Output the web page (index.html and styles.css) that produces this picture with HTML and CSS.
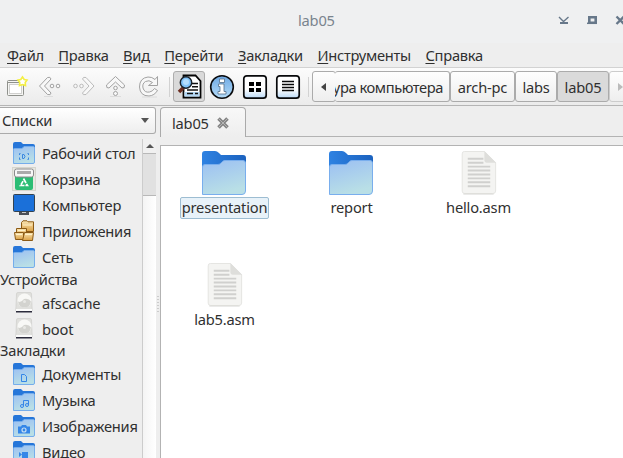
FILE: index.html
```html
<!DOCTYPE html>
<html lang="ru">
<head>
<meta charset="utf-8">
<title>lab05</title>
<link rel="stylesheet" href="styles.css">
</head>
<body>
<svg class="defs" width="0" height="0">
  <defs>
    <linearGradient id="front" x1="0" y1="0" x2=".35" y2="1"><stop offset="0" stop-color="#9bbff3"/><stop offset="1" stop-color="#b9dfe6"/></linearGradient>
    <linearGradient id="back" x1="0" y1="0" x2="1" y2="0"><stop offset="0" stop-color="#2f82e2"/><stop offset="1" stop-color="#1b62bf"/></linearGradient>
    <linearGradient id="gloss" x1="0" y1="0" x2="0" y2="1"><stop offset="0" stop-color="#6da8e3"/><stop offset="1" stop-color="#b5dcf8"/></linearGradient>
    <linearGradient id="tile" x1="0" y1="0" x2="0" y2="1"><stop offset="0" stop-color="#fff"/><stop offset=".6" stop-color="#fff"/><stop offset="1" stop-color="#b9d9f7"/></linearGradient>
    <linearGradient id="gold" x1="0" y1="0" x2="0" y2="1"><stop offset="0" stop-color="#fae6b4"/><stop offset="1" stop-color="#daa044"/></linearGradient>
    <symbol id="folder" viewBox="0 0 44 44">
      <path fill="url(#back)" d="M0 3Q0 0 3 0H13Q15 0 17 2L19 4H41Q44 4 44 7V20H0z"/>
      <path fill="url(#front)" stroke="#79aeed" d="M.5 16Q.5 13.500 3 13.500H16Q18 13.500 19.500 11.500L20.500 10.500Q21.500 9.500 23 9.500H41Q43.500 9.500 43.500 12V40Q43.500 43.500 40 43.500H.5z"/>
    </symbol>
    <symbol id="folder-small" viewBox="0 0 22 22">
      <path fill="#2676d9" d="M0 2Q0 0 2 0H8L10 2H20Q22 2 22 4V10H0z"/>
      <path fill="url(#front)" stroke="#75adeb" d="M.5 7Q.5 6.500 1.500 6.500H9L11 4.500H20.500Q21.500 4.500 21.500 6V20Q21.500 21.500 20 21.500H.5z"/>
    </symbol>
    <symbol id="file" viewBox="0 0 36 45">
      <path fill="#f4f4f2" stroke="#e4e4e1" d="M3 .5H23.500L35 12V41Q35 43.500 32 43.500H3.500Q.8 43.500.8 41V3Q.8.5 3 .5z"/>
      <path stroke="#d6d6d3" d="M2 44H33"/>
      <path fill="#dededb" d="M23.500 0L35.500 12H26Q23.500 12 23.500 9z"/>
      <path stroke="#d0d0ce" stroke-width="2" d="M6.500 8H22.500M6.500 12H22.500M6.500 16H29.500M6.500 20H29.500M6.500 24H29.500M6.500 28H29.500M6.500 32H29.500M6.500 36H29.500"/>
    </symbol>
    <symbol id="drive" viewBox="0 0 22 22">
      <path fill="#e0e0dd" stroke="#cfcfcb" stroke-width=".7" d="M5 .5H17Q18.500.5 18.500 2L19.200 19H2.800L3.500 2Q3.500.5 5 .5z"/>
      <circle cx="11.500" cy="8.500" r="7" fill="#f8f8f6"/>
      <path fill="#d3d3cf" d="M5 9.500Q8 11 11 7Q16 6 18 9.500Q17 15.500 11.500 15.500Q6 15.500 5 9.500z"/>
      <circle cx="11.500" cy="9.500" r="1.500" fill="#e8e8e5"/>
      <path fill="#fcfcfb" d="M3 17H19V19H3z"/><path fill="#2c2c3c" d="M3 19H19V20.500H3z"/>
    </symbol>
  </defs>
</svg>

<header class="titlebar">
  <span class="caption">lab05</span>
  <svg class="winbtns" width="70" height="14" viewBox="0 0 70 14" fill="none" stroke="#67788a">
    <path stroke-width="1.400" d="M6 3L10.500 7.500L15.500 3"/><path stroke-width="2" d="M7 9H15"/>
    <path stroke-width="2.600" d="M36.300 3.300H42.700V8.700H36.300z"/><path stroke-width="1.500" d="M34 9.300H44"/>
    <path stroke-width="2.300" d="M63.500 2.500L71 10M71 2.500L63.500 10"/>
  </svg>
</header>

<nav class="menubar">
  <span><u>Ф</u>айл</span><span><u>П</u>равка</span><span><u>В</u>ид</span><span><u>П</u>ерейти</span><span><u>З</u>акладки</span><span><u>И</u>нструменты</span><span><u>С</u>правка</span>
</nav>

<div class="toolbar">
  <svg class="tools" width="168" height="36" viewBox="0 0 168 36" fill="none">
    <rect x="7.500" y="12.500" width="16" height="15" rx="1" fill="#f5f5f3" stroke="#8f918c"/>
    <path stroke="#8f918c" d="M7.500 14.500H23.500"/><rect x="9.500" y="16.500" width="12" height="9" fill="#fff" stroke="#d0d0ce"/>
    <path fill="#fff" stroke="#f4ef43" stroke-width="1.600" d="M22.500 9L24.200 11.500L27 12L25.200 14.500L25.500 17.500L22.500 16.500L19.500 17.500L19.800 14.500L18 12L20.800 11.500z"/>
    <g fill="#f8f8f8" stroke="#a2a2a2" stroke-width="1">
      <path d="M39.500 18L47.500 9.500Q50.500 8.500 51 11L44.500 18L51 25Q51 27.500 47.500 26.500z"/>
      <circle cx="52" cy="18" r="1.800"/><circle cx="58" cy="18" r="1.800"/>
      <path stroke="#bbb" d="M94 18L86 9.500Q83 8.500 82.500 11L89 18L82.500 25Q82.500 27.500 86 26.500z"/>
      <circle cx="75.500" cy="18" r="1.800" stroke="#bbb"/><circle cx="81.500" cy="18" r="1.800" stroke="#bbb"/>
      <path d="M115.500 8.500L124.500 17Q125 20.500 122 20L115.500 14L109 20Q106 20.500 106.500 17z"/>
      <circle cx="115.500" cy="20" r="1.800"/><circle cx="115.500" cy="25.500" r="2"/>
      <path d="M157.500 8.500V17.500H148.500L152.500 14.500Q149 11.500 145.500 13.500Q142 15.500 143 20Q144.500 25 149.500 24Q152.500 23.500 154.500 20.500L157.500 22.500Q154.500 27.500 149 28Q140 28 139.500 19Q139.500 10 148 9Q152 8.800 155 11.500z"/>
    </g>
    <path stroke="#d0d0d0" opacity=".6" d="M44 28.500H53M110 28.500H121M142 29H157"/>
  </svg>
  <i class="sep"></i>
  <div class="toggle">
    <svg width="30" height="30" viewBox="0 0 30 30">
      <path d="M9.500 3.500H21.500L26.500 9V25.500H9.500z" fill="#fff" stroke="#050505" stroke-width="1.800"/>
      <path d="M10.500 20H25.500V24.500H10.500z" fill="#b5d8f5"/><path stroke="#111" stroke-width="1.600" d="M17 11.500H24M18 14.800H24M13 18H24M13 21.500H19M21 21.500H24"/>
      <path d="M9.500 15.500L5 20" stroke="#6b2d20" stroke-width="3.500"/><circle cx="12" cy="10.500" r="5.700" fill="#83c4fa" stroke="#18222c" stroke-width="1.500"/><circle cx="12" cy="10" r="3" fill="#b4defe"/>
    </svg>
  </div>
  <svg class="views" width="92" height="26" viewBox="0 0 92 26">
    <circle cx="13" cy="13" r="11.300" fill="url(#gloss)" stroke="#0b0c0e" stroke-width="1.600"/>
    <path fill="#fff" stroke="#56708a" stroke-width=".8" d="M10.500 5H15.500V8.500H10.500zM9.500 10H15V17.500H17V20H9V17.500H11V12.500H9.500z"/>
    <rect x="34.800" y="1.800" width="22.400" height="22.400" rx="3" fill="url(#tile)" stroke="#08090b" stroke-width="1.700"/>
    <path d="M40 8H45V12H40zM47 8H52V12H47zM40 14H45V18H40zM47 14H52V18H47z"/>
    <rect x="67.800" y="1.800" width="22.400" height="22.400" rx="3" fill="url(#tile)" stroke="#08090b" stroke-width="1.700"/>
    <path stroke="#080808" stroke-width="1.500" d="M73 7.500H85M73 10.500H85M73 13.500H85M73 16.500H85"/>
  </svg>
  <i class="sep sep2"></i>
  <div class="path">
    <div class="crumb prev"><svg width="6" height="8"><path fill="#444" d="M5 0V8L0 4z"/></svg></div>
    <div class="crumb c1"><span>ура компьютера</span></div>
    <div class="crumb c2"><span>arch-pc</span></div>
    <div class="crumb c3"><span>labs</span></div>
    <div class="crumb c4"><span>lab05</span></div>
    <div class="crumb next"><svg width="6" height="8"><path fill="#bbb" d="M0 0V8L5 4z"/></svg></div>
  </div>
</div>

<main class="body">
  <aside class="side">
    <div class="combo"><span>Списки</span><svg width="8" height="5"><path fill="#555" d="M0 0H8L4 5z"/></svg></div>
    <div class="sidebody">
      <ul class="list">
        <li><svg class="ic"><use href="#folder-small"/><path fill="none" stroke="#3b87e0" d="M7.500 11.500H6.500V13M6.500 15.500V17.500H7.500M14.500 11.500H15.500V13M15.500 15.500V17.500H14.500M9.500 12.500H11Q13 14.500 11 16.500H9.500z"/></svg><span>Рабочий стол</span></li>
        <li><svg class="ic trash" viewBox="0 0 24 24"><rect x=".5" y=".5" width="23" height="23" fill="#e7e7e1" stroke="#d5d5cd"/><path fill="#2bbd74" d="M3 9H21V21Q21 23 19 23H5Q3 23 3 21z"/><rect x="2.500" y="2" width="19" height="8" rx="2" fill="#f7f7f7" stroke="#8c8c8c"/><path fill="#aaa" d="M5 4H19V7H5z"/><path fill="none" stroke="#fff" stroke-width="1.700" stroke-dasharray="4 1" d="M12 12.500L15.500 18.500H8.500z"/></svg><span>Корзина</span></li>
        <li><svg class="ic"><rect x=".5" y=".5" width="21" height="17" rx="1" fill="#1b70d9" stroke="#34424f"/><path fill="#4b5057" d="M6 18H16V21H6z"/><path fill="#ccc" d="M9 18H13V19H9z"/></svg><span>Компьютер</span></li>
        <li><svg class="ic"><g fill="url(#gold)" stroke="#8c5a14"><path d="M8.500 2.500L10 .8H14L15 1.800H20.500V11.500H8.500z"/><path d="M3.500 8.500H13.500V15.500H3.500z"/><path d="M1.500 12.500H10.500V19.500H2.500z"/><path d="M11.500 12.500H20.500L19.500 20.500H9.500z"/></g><path stroke="#fff1c8" d="M10 5H19M5 10.500H12M3 14.500H9M12 14.500H19"/></svg><span>Приложения</span></li>
        <li><svg class="ic"><use href="#folder-small"/></svg><span>Сеть</span></li>
        <li class="head"><span>Устройства</span></li>
        <li><svg class="ic"><use href="#drive"/></svg><span>afscache</span></li>
        <li><svg class="ic"><use href="#drive"/></svg><span>boot</span></li>
        <li class="head h2"><span>Закладки</span></li>
        <li><svg class="ic"><use href="#folder-small"/><path fill="none" stroke="#3486e8" d="M8.500 11.500H11.500L13.500 13.500V18.500H8.500z"/></svg><span>Документы</span></li>
        <li><svg class="ic"><use href="#folder-small"/><path fill="none" stroke="#3486e8" d="M10.500 17V11.500H15.500V16"/><circle cx="9" cy="17" r="1.500" fill="none" stroke="#3486e8"/><circle cx="14" cy="16" r="1.500" fill="none" stroke="#3486e8"/></svg><span>Музыка</span></li>
        <li><svg class="ic"><use href="#folder-small"/><path fill="#3486e8" d="M5 11.500H8L9 10H13L14 11.500H17V18.500H5z"/><circle cx="11" cy="15" r="2" fill="none" stroke="#c5def4" stroke-width="1.200"/></svg><span>Изображения</span></li>
        <li><svg class="ic"><use href="#folder-small"/><path fill="#3486e8" d="M6 11L9 13.500L6 16zM9 11H15V17H9z"/></svg><span>Видео</span></li>
      </ul>
      <div class="scroll"><div class="up"><svg width="8" height="4"><path fill="#555" d="M0 4L4 0L8 4z"/></svg></div><div class="thumb"></div></div>
    </div>
  </aside>
  <div class="grip"><svg width="2" height="17"><path stroke="#aaa" stroke-dasharray="1 2" d="M1 0V17"/></svg></div>
  <section class="content">
    <div class="tabs"><div class="tab"><span>lab05</span><svg width="12" height="12"><path stroke="#858585" stroke-width="3.600" d="M1.500 1.500L10.500 10.500M10.500 1.500L1.500 10.500"/><path stroke="#b4b4b4" stroke-width="1" d="M2 2L10 10M10 2L2 10"/></svg></div></div>
    <div class="files">
      <figure><svg class="big"><use href="#folder"/></svg><figcaption class="sel"><span>presentation</span></figcaption></figure>
      <figure><svg class="big"><use href="#folder"/></svg><figcaption><span>report</span></figcaption></figure>
      <figure><svg class="doc"><use href="#file"/></svg><figcaption><span>hello.asm</span></figcaption></figure>
      <figure><svg class="doc"><use href="#file"/></svg><figcaption><span>lab5.asm</span></figcaption></figure>
    </div>
  </section>
</main>
</body>
</html>
```
FILE: styles.css
```css
* { box-sizing: border-box; }
body { margin: 0; width: 623px; height: 458px; overflow: hidden; display: flex; flex-direction: column; background: #eee; color: #303030; font: 14.67px/20px "Noto Sans", sans-serif; letter-spacing: -.2px; white-space: nowrap; }
svg { display: block; flex: none; }
span { flex: none; padding-bottom: 2px; }
.defs { position: absolute; }
.titlebar { height: 43px; flex: none; background: #eff0f1; display: grid; grid-template-columns: 298px 1fr 70px; align-items: center; color: #7a848e; }
.caption { grid-column: 2; padding-bottom: 4px; }
.winbtns { margin-top: -2px; overflow: visible; }
.menubar { height: 24px; flex: none; display: flex; align-items: center; padding: 2px 0 0 7px; gap: 14.5px; letter-spacing: -.25px; }
u { text-underline-offset: 2px; text-decoration-thickness: 1px; }
.toolbar { height: 39px; flex: none; display: flex; align-items: center; border-top: 1px solid #d2d2d2; border-bottom: 1px solid #b5b5b5; background: linear-gradient(#fcfcfc, #ebebeb); overflow: hidden; }
.tools { align-self: flex-start; }
.sep { width: 1px; height: 20px; background: #d2d2d2; margin: 0 3px 0 1px; flex: none; }
.toggle { width: 32px; height: 31px; flex: none; border: 1px solid #adadad; border-radius: 3px; background: #dadada; display: flex; align-items: center; justify-content: center; }
.views { margin-left: 4px; }
.sep2 { margin: 0 3px 0 7px; }
.path { display: flex; flex: none; }
.crumb { height: 31px; border: 1px solid #ababab; border-radius: 3px; background: linear-gradient(#fefefe, #eee); display: flex; align-items: center; justify-content: center; flex: none; overflow: hidden; }
.crumb span { padding-bottom: 0; }
.prev { width: 24px; }
.c1 { width: 115px; margin-left: -1px; border-left: 0; justify-content: flex-end; padding-right: 6px; letter-spacing: -.42px; }
.c2 { width: 65px; }
.c3 { width: 42px; }
.c4 { width: 52px; background: #dadada; }
.next { width: 24px; border-color: #ccc; }
.body { display: flex; flex: 1; min-height: 0; }
.side { width: 156px; flex: none; display: flex; flex-direction: column; min-height: 0; }
.combo { height: 27px; margin-top: 1px; flex: none; border: 1px solid #aaa; border-left: 0; border-radius: 0 3px 3px 0; background: linear-gradient(#fff, #eee); display: flex; align-items: center; justify-content: space-between; padding: 0 6px 0 2px; }
.sidebody { display: flex; flex: 1; min-height: 0; margin-top: 5px; }
.list { list-style: none; margin: 0; padding: 1px 0 0; width: 142px; flex: none; overflow: hidden; }
.list li { height: 26px; display: flex; align-items: center; padding-left: 13px; gap: 7px; }
.list li span { padding-bottom: 1px; }
.list li.head { height: 20px; padding-left: 0; }
.list li.head span { padding-bottom: 2px; }
.list li.h2 { height: 19px; }
.list li.h2 span { padding-bottom: 3px; }
.ic { width: 22px; height: 22px; }
.trash { width: 24px; height: 24px; margin: 0 -1px; }
.scroll { width: 14px; border-left: 1px solid #ccc; background: linear-gradient(90deg, #f4f4f4, #fff); }
.up { height: 14px; display: flex; justify-content: center; align-items: center; background: #f0f0f0; }
.thumb { height: 43px; background: #e1e1e1; border-top: 1px solid #b8b8b8; border-bottom: 1px solid #b8b8b8; }
.grip { width: 4px; flex: none; display: flex; align-items: center; justify-content: center; padding-top: 45px; }
.content { flex: 1; display: flex; flex-direction: column; min-width: 0; }
.tabs { height: 39px; flex: none; display: flex; align-items: stretch; padding-top: 1px; border-bottom: 8px solid #eee; }
.tabs::after { content: ""; flex: 1; border-bottom: 1px solid #b3b3b3; }
.tab { width: 86px; flex: none; border: 1px solid #aaa; border-bottom: 0; border-radius: 4px 4px 0 0; background: linear-gradient(#f8f8f8, #eee); display: flex; align-items: center; padding: 1px 0 0 11px; gap: 8px; }
.tab span { padding-bottom: 0; }
.files { flex: 1; background: #fff; border: solid #b3b3b3; border-width: 1px 0 0 1px; display: grid; grid-template-columns: repeat(3, 127px); grid-auto-rows: 112px; align-content: start; padding-top: 5px; }
figure { margin: 0; display: flex; flex-direction: column; align-items: center; }
.big { width: 44px; height: 44px; margin-right: 1px; }
.doc { width: 36px; height: 44px; }
figcaption { height: 22px; margin-top: 2px; display: flex; align-items: center; justify-content: center; border: 1px solid transparent; border-radius: 2px; }
.sel { width: 89px; background: #e8f2f9; border-color: #9dbdd2; }
```
